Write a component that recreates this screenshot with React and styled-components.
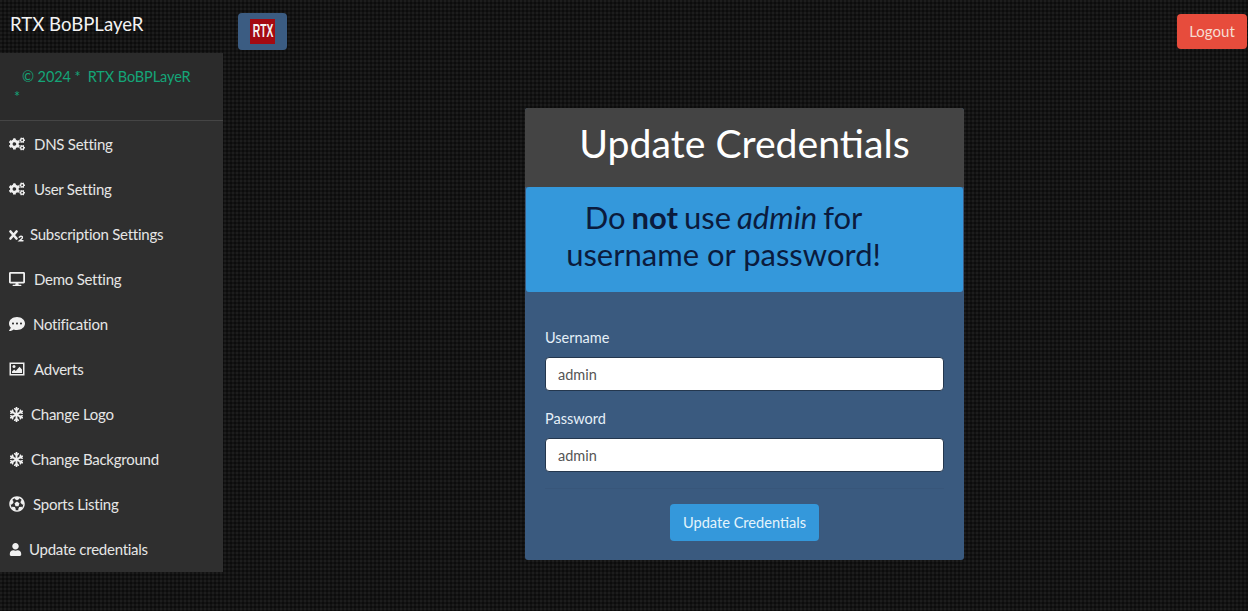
import React from 'react'
import styled, { createGlobalStyle } from 'styled-components'
import { FaCogs, FaDesktop, FaCommentDots, FaSnowflake, FaFutbol, FaUser } from 'react-icons/fa'

const GlobalStyle = createGlobalStyle`
  html, body {
    margin: 0;
    padding: 0;
    height: 100%;
    overflow: hidden;
  }
  body {
    font-family: Lato, "Liberation Sans", sans-serif;
    background-color: #131313;
    background-image:
      radial-gradient(circle at 1px 1px, #1d1d1d 0.8px, transparent 1.2px),
      radial-gradient(circle at 3px 3px, #0c0c0c 0.8px, transparent 1.2px);
    background-size: 4px 4px;
    color: #fff;
  }
`

const Page = styled.div`
  width: 1248px;
  height: 611px;
  display: flex;
  flex-direction: column;
`

const TopBar = styled.header`
  height: 53px;
  display: flex;
  align-items: flex-start;
  flex: none;
`

const Brand = styled.div`
  width: 223px;
  box-sizing: border-box;
  padding: 12px 0 0 10px;
  font-size: 18.6px;
  line-height: 24px;
  color: #f4f4f4;
`

const LogoButton = styled.button`
  width: 49px;
  height: 37px;
  margin: 13px 0 0 15px;
  padding: 0;
  border: none;
  border-radius: 4px;
  background: #3b5c82;
  display: flex;
  align-items: center;
  justify-content: center;
`

const LogoBadge = styled.span`
  width: 25px;
  height: 25px;
  background: #a40a12;
  display: flex;
  align-items: center;
  justify-content: center;
  overflow: hidden;
`

const LogoText = styled.span`
  color: #f4f4f4;
  font-family: "Liberation Sans", sans-serif;
  font-size: 18px;
  font-weight: 700;
  line-height: 25px;
  display: block;
  transform: scaleX(0.57);
`

const LogoutButton = styled.button`
  margin: 14px 1px 0 auto;
  width: 70px;
  height: 35px;
  padding: 0 0 2px;
  border: none;
  border-radius: 4px;
  background: #e74c3c;
  color: #f6dcd2;
  font-family: inherit;
  font-size: 15px;
`

const Body = styled.div`
  flex: 1;
  display: flex;
  align-items: flex-start;
`

const Sidebar = styled.aside`
  width: 223px;
  flex: none;
  background: #2f2f2f;
`

const Copyright = styled.div`
  height: 68px;
  box-sizing: border-box;
  padding: 14px 10px 0 14px;
  background: #2b2b2b;
  border-bottom: 1px solid #454545;
  color: #14a578;
  font-size: 14.5px;
  letter-spacing: -0.1px;
  line-height: 20px;
  text-indent: 8px;
`

const NavList = styled.nav`
  display: flex;
  flex-direction: column;
`

const NavItem = styled.a`
  height: 45.1px;
  display: flex;
  align-items: center;
  padding-left: 9px;
  color: #e6e6e6;
  font-size: 15px;
  letter-spacing: -0.25px;
`

const IconSlot = styled.span`
  flex: none;
  width: ${(p) => p.$width}px;
  display: flex;
  color: #f0f0f0;
  svg {
    width: ${(p) => p.$size}px;
    height: ${(p) => p.$size}px;
  }
`

const NavLabel = styled.span`
  margin-left: ${(p) => p.$gap}px;
`

const Content = styled.main`
  flex: 1;
  padding: 55px 0 0 302px;
`

const Card = styled.section`
  width: 439px;
  height: 452px;
  background: #3a5a7f;
  border-radius: 3px;
  overflow: hidden;
  display: flex;
  flex-direction: column;
`

const CardHeader = styled.h1`
  margin: 0;
  height: 79px;
  background: #444444;
  color: #fff;
  font-size: 39.2px;
  font-weight: 400;
  line-height: 69px;
  text-align: center;
`

const Alert = styled.div`
  margin: 0 1px;
  height: 105px;
  box-sizing: border-box;
  padding: 12px 42px 0 0;
  background: #3498db;
  border-radius: 3px;
  color: #0b1b3d;
  font-size: 31px;
  line-height: 37px;
  text-align: center;
`

const AlertFirstLine = styled.span`
  word-spacing: -2px;
`

const Form = styled.form`
  padding: 36px 20px 0;
  display: flex;
  flex-direction: column;
`

const Label = styled.label`
  font-size: 14.5px;
  line-height: 20px;
  color: #e6f0f8;
  margin-bottom: 9px;
`

const Input = styled.input`
  height: 34px;
  box-sizing: border-box;
  padding: 0 12px;
  border: 1px solid #24374e;
  border-radius: 4px;
  background: #fff;
  color: #555;
  font-family: inherit;
  font-size: 14.5px;
  margin-bottom: ${(p) => p.$spaceBelow}px;
  outline: none;
`

const Divider = styled.hr`
  width: 100%;
  margin: 0 0 15px;
  border: none;
  border-top: 1px solid #38567a;
`

const SubmitButton = styled.button`
  align-self: center;
  width: 149px;
  height: 37px;
  border: none;
  border-radius: 4px;
  background: #3498db;
  color: #e4f4fb;
  font-family: inherit;
  font-size: 14.6px;
`

const SubscriptIcon = () => (
  <svg viewBox="0 0 16 16" fill="none" stroke="currentColor" strokeLinecap="round">
    <path d="M1.5 5.5 L7.5 12.5 M7.5 5.5 L1.5 12.5" strokeWidth="2.6" />
    <path d="M10.2 11.2 Q12 9.5 13.4 10.8 Q13.9 12 12.2 13.3 L10.4 14.8 H14" strokeWidth="1.4" />
  </svg>
)

const PictureIcon = () => (
  <svg viewBox="0 0 16 16" fill="currentColor">
    <path fillRule="evenodd" d="M0.5 1.5 H15.5 V14.5 H0.5 Z M2 3 V13 H14 V3 Z" />
    <circle cx="5" cy="5.6" r="1.5" />
    <path d="M3 12 V10.6 L5.2 8.5 L6.8 10 L10.5 5.8 L13 8.4 V12 Z" />
  </svg>
)

const navItems = [
  { label: 'DNS Setting', Icon: FaCogs, width: 16, size: 16, gap: 9 },
  { label: 'User Setting', Icon: FaCogs, width: 16, size: 16, gap: 9 },
  { label: 'Subscription Settings', Icon: SubscriptIcon, width: 16, size: 16, gap: 5 },
  { label: 'Demo Setting', Icon: FaDesktop, width: 16, size: 16, gap: 9 },
  { label: 'Notification', Icon: FaCommentDots, width: 16, size: 16, gap: 8 },
  { label: 'Adverts', Icon: PictureIcon, width: 16, size: 16, gap: 9 },
  { label: 'Change Logo', Icon: FaSnowflake, width: 16, size: 15, gap: 6 },
  { label: 'Change Background', Icon: FaSnowflake, width: 16, size: 15, gap: 6 },
  { label: 'Sports Listing', Icon: FaFutbol, width: 16, size: 16, gap: 8 },
  { label: 'Update credentials', Icon: FaUser, width: 13, size: 13, gap: 7 },
]

export default function App() {
  return (
    <Page>
      <GlobalStyle />
      <TopBar>
        <Brand>RTX BoBPLayeR</Brand>
        <LogoButton aria-label="RTX">
          <LogoBadge>
            <LogoText>RTX</LogoText>
          </LogoBadge>
        </LogoButton>
        <LogoutButton>Logout</LogoutButton>
      </TopBar>
      <Body>
        <Sidebar>
          <Copyright>© 2024 *&nbsp; RTX BoBPLayeR<br />*</Copyright>
          <NavList>
            {navItems.map(({ label, Icon, width, size, gap }) => (
              <NavItem key={label}>
                <IconSlot $width={width} $size={size}>
                  <Icon />
                </IconSlot>
                <NavLabel $gap={gap}>{label}</NavLabel>
              </NavItem>
            ))}
          </NavList>
        </Sidebar>
        <Content>
          <Card>
            <CardHeader>Update Credentials</CardHeader>
            <Alert>
              <AlertFirstLine>Do <b>not</b> use <i>admin</i> for</AlertFirstLine>
              <br />username or password!
            </Alert>
            <Form onSubmit={(e) => e.preventDefault()}>
              <Label>Username</Label>
              <Input defaultValue="admin" $spaceBelow={18} />
              <Label>Password</Label>
              <Input defaultValue="admin" $spaceBelow={16} />
              <Divider />
              <SubmitButton>Update Credentials</SubmitButton>
            </Form>
          </Card>
        </Content>
      </Body>
    </Page>
  )
}
